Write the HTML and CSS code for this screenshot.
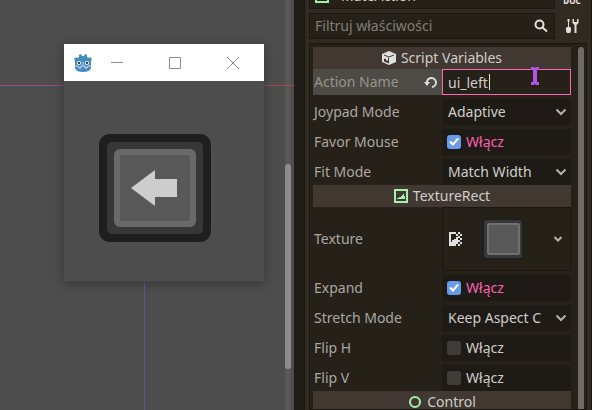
FILE: index.html
```
<!DOCTYPE html>
<html lang="pl">
<head>
<meta charset="utf-8">
<meta name="viewport" content="width=device-width, initial-scale=1">
<title>Inspektor</title>
<link rel="stylesheet" href="styles.css">
</head>
<body>
<svg class="defs" aria-hidden="true">
  <symbol id="chevron" viewBox="0 0 12 12"><path d="M1.5 3.5 6 8l4.500-4.500" fill="none" stroke="currentColor" stroke-width="2"/></symbol>
  <symbol id="texture-rect" viewBox="0 0 14 14"><path d="M1 1h12v12H1z" fill="none" stroke="#a5efac" stroke-width="2"/><path d="M3 10V9h2V8h2V7h1V6h1V5h1v2h1v3z" fill="#a5efac"/></symbol>
</svg>
<main class="editor">
  <section class="viewport">
    <div class="canvas">
      <div class="axis-x"></div>
      <div class="axis-y"></div>
      <div class="game">
        <header class="game-bar">
          <svg class="logo" viewBox="0 0 18 18" aria-hidden="true">
            <path d="M5 3V1l2-1 1 2h2l1-2 2 1v2l2 1 1-1 2 2-1 2v7q-1 4-8 4t-8-4V7L0 5l2-2 1 1z" fill="#478cbf"/>
            <path d="M1 12h3l1 2h2v-2h4v2h2l1-2h3" fill="none" stroke="#cfe3f0" stroke-width="1"/>
            <circle cx="5" cy="9" r="2" fill="#fff"/><circle cx="13" cy="9" r="2" fill="#fff"/>
            <circle cx="5" cy="9" r="1.200" fill="#414042"/><circle cx="13" cy="9" r="1.200" fill="#414042"/>
            <path d="M8.500 8h1v3h-1z" fill="#cfe3f0"/>
          </svg>
          <button class="win-btn" aria-label="Minimalizuj"><svg viewBox="0 0 12 12"><path d="M0 5.500h12"/></svg></button>
          <button class="win-btn" aria-label="Maksymalizuj"><svg viewBox="0 0 12 12"><path d="M.5.5h11v11H.5z"/></svg></button>
          <button class="win-btn" aria-label="Zamknij"><svg viewBox="0 0 12 12"><path d="m0 0 12 12M12 0 0 12"/></svg></button>
        </header>
        <div class="game-body">
          <svg class="key" viewBox="0 0 112 108" preserveAspectRatio="none" aria-hidden="true">
            <rect width="112" height="108" rx="11" fill="#1f1f1f"/>
            <rect x="8" y="8" width="96" height="92" rx="5" fill="#373737"/>
            <rect x="15" y="15" width="82" height="78" rx="6" fill="#696969"/>
            <rect x="21" y="21" width="70" height="66" rx="2" fill="#585858"/>
            <path d="M32 54 56 36v9h22v18H56v9z" fill="#cdcdcd"/>
          </svg>
        </div>
      </div>
    </div>
    <div class="view-scroll"><div class="view-thumb"></div></div>
  </section>
  <aside class="dock">
    <div class="tool-row object-row">
      <div class="field object-name"><svg class="icon"><use href="#texture-rect"/></svg><span>MateAction</span></div>
      <button class="tool doc" aria-label="Dokumentacja">DOC</button>
    </div>
    <div class="tool-row">
      <div class="field">
        <input class="filter" type="text" placeholder="Filtruj właściwości" aria-label="Filtruj właściwości">
        <svg class="icon" viewBox="0 0 14 14" aria-hidden="true"><circle cx="5.500" cy="5.500" r="4" fill="none" stroke="#e0dfdc" stroke-width="2"/><path d="m8.500 8.500 4.500 4" stroke="#e0dfdc" stroke-width="2"/></svg>
      </div>
      <button class="tool" aria-label="Narzędzia"><svg class="icon" viewBox="0 0 14 14"><path d="M2.500 0h2v2L4 3v5h1l1 1v3l-1 2H2l-1-2V9l1-1h1V3l-.5-1zM7.500 0v4l2 2v8h2V6l2-2V0H12v3H9V0z" fill="#e0dfdc"/></svg></button>
    </div>
    <div class="inspector">
      <div class="props">
        <h2 class="section"><svg class="icon" viewBox="0 0 14 14" aria-hidden="true"><path d="M7 0 0 3v8l7 3 7-3V3z" fill="#e0e0e0"/><path d="M2 4l5 2 5-2" stroke="#403831" fill="none" stroke-width="1"/><path d="M7 6.500v6L2 10.500v-3L4 8v1l2 1V7z" fill="#403831"/></svg>Script Variables</h2>
        <div class="row active">
          <label for="action">Action Name</label>
          <button class="revert" aria-label="Przywróć"><svg class="icon" viewBox="0 0 14 14"><path d="M3 8V7a4.500 4.500 0 1 1 5 5" fill="none" stroke="#e0e0e0" stroke-width="2"/><path d="M0 7h6L3 11z" fill="#e0e0e0"/></svg></button>
          <div class="value"><input id="action" class="text" type="text" value="ui_left"><span class="caret"></span>
            <svg class="pointer" viewBox="0 0 8 18" aria-hidden="true"><path d="M0 0h3l1 1 1-1h3v3H6v12h2v3H5l-1-1-1 1H0v-3h2V3H0z" fill="#b054ea"/></svg>
          </div>
        </div>
        <div class="row"><label for="joypad">Joypad Mode</label><div class="value"><select id="joypad"><option>Adaptive</option></select><svg class="chev"><use href="#chevron"/></svg></div></div>
        <div class="row"><label for="favor">Favor Mouse</label><label class="value check"><input id="favor" type="checkbox" checked><span>Włącz</span></label></div>
        <div class="row"><label for="fit">Fit Mode</label><div class="value"><select id="fit"><option>Match Width</option></select><svg class="chev"><use href="#chevron"/></svg></div></div>
        <h2 class="section"><svg class="icon"><use href="#texture-rect"/></svg>TextureRect</h2>
        <div class="row"><span class="name">Texture</span>
          <div class="value texture">
            <svg class="icon" viewBox="0 0 14 14" aria-hidden="true"><path d="M0 0h7v2H2v8h5v4H0zM3 10V8h2V7h2V5h2v5zM9 0h2v2H9zM7 2h2v2H7zM11 2h2v2h-2zM9 4h2v2H9zM11 6h2v2h-2zM9 8h2v2H9zM11 10h2v2h-2zM7 10h2v2H7zM9 12h2v2H9z" fill="#e0e0e0"/></svg>
            <svg class="thumb" viewBox="0 0 42 42" aria-hidden="true"><rect width="42" height="42" rx="4" fill="#1f1f20"/><rect x="2" y="2" width="38" height="38" rx="2" fill="#373737"/><rect x="5" y="5" width="33" height="32" rx="2" fill="#707070"/><rect x="7" y="7" width="29" height="28" rx="1" fill="#585858"/></svg>
            <button class="more" aria-label="Więcej"><svg viewBox="0 0 8 8"><path d="M.5 2 4 5.500 7.500 2" fill="none" stroke="#b5b2ad" stroke-width="2"/></svg></button>
          </div>
        </div>
        <div class="row"><label for="expand">Expand</label><label class="value check"><input id="expand" type="checkbox" checked><span>Włącz</span></label></div>
        <div class="row"><label for="stretch">Stretch Mode</label><div class="value"><select id="stretch"><option>Keep Aspect C</option></select><svg class="chev"><use href="#chevron"/></svg></div></div>
        <div class="row"><label for="fliph">Flip H</label><label class="value check"><input id="fliph" type="checkbox"><span>Włącz</span></label></div>
        <div class="row"><label for="flipv">Flip V</label><label class="value check"><input id="flipv" type="checkbox"><span>Włącz</span></label></div>
        <h2 class="section"><svg class="icon" viewBox="0 0 14 14" aria-hidden="true"><circle cx="7" cy="7" r="5" fill="none" stroke="#a5efac" stroke-width="2"/></svg>Control</h2>
      </div>
      <div class="dock-scroll"></div>
    </div>
  </aside>
</main>
</body>
</html>
```
FILE: styles.css
```
* { box-sizing: border-box; }
body {
  margin: 0;
  height: 100vh;
  overflow: hidden;
  background: #1f1c17;
  color: #d0cdc8;
  font: 14px/20px "Noto Sans", sans-serif;
}
button, input, select { font: inherit; color: inherit; margin: 0; padding: 0; border: 0; background: none; outline: 0; }
svg { display: block; flex: none; }
.defs { position: absolute; width: 0; height: 0; }
.icon { width: 14px; height: 14px; }
.editor { display: flex; gap: 10px; height: 100%; }

.viewport { flex: 1; display: flex; position: relative; background: #4d4d4d; }
.canvas { flex: 1; }
.axis-x, .axis-y { position: absolute; }
.axis-x { top: 85px; left: 0; right: 0; height: 1px; background: linear-gradient(90deg, #964b8c 40%, #b0405a 60%); }
.axis-y { top: 85px; bottom: 0; left: 144px; width: 1px; background: #5656a8; }
.game {
  position: absolute;
  left: 64px;
  top: 44px;
  width: 200px;
  background: #4d4d4d;
  box-shadow: 0 0 0 1px #454545, 0 2px 10px rgba(0, 0, 0, .35);
}
.game-bar { display: flex; align-items: center; height: 37px; padding: 0 2px 0 10px; background: #fff; }
.logo { width: 18px; height: 18px; margin-right: -4px; }
.win-btn { flex: 1; display: flex; justify-content: center; }
.win-btn svg { width: 12px; height: 12px; fill: none; stroke: #8c8c8c; stroke-width: 1; }
.game-body { display: flex; padding: 53px 35px 39px; }
.key { width: 112px; height: 108px; }
.view-scroll { display: flex; flex-direction: column; width: 6px; margin-right: 3px; padding-top: 164px; background: #585858; }
.view-thumb { height: 205px; border-radius: 3px; background: #8c8c8c; }

.dock { flex: none; width: 288px; display: flex; flex-direction: column; gap: 4px; padding: 0 4px; margin-top: -17px; background: #302b20; border-left: 1px solid #1a1712; border-right: 1px solid #1a1712; }
.tool-row { display: flex; height: 26px; flex: none; }
.field { flex: 1; min-width: 0; display: flex; align-items: center; gap: 8px; padding: 0 6px 0 5px; background: #252119; border: 1px solid #1c1914; }
.object-name { gap: 12px; }
.filter { flex: 1; min-width: 0; }
.filter::placeholder { color: #817d77; opacity: 1; }
.tool { width: 32px; display: flex; align-items: center; justify-content: center; padding-left: 2px; color: #e0dfdc; }
.doc { font-size: 8px; font-weight: 800; line-height: 8px; align-items: flex-end; padding-bottom: 4px; }

.inspector { flex: 1; min-height: 0; overflow: hidden; display: flex; gap: 7px; padding: 3px 2px 0 3px; background: #252119; border: 1px solid #1a1712; }
.props { flex: 1; min-width: 0; }
.dock-scroll { width: 6px; border-radius: 3px 3px 0 0; background: #6e6a64; }
.section { display: flex; align-items: center; justify-content: center; gap: 5px; height: 22px; margin: 0; background: #403831; font-size: 14px; font-weight: 400; }
.row { display: flex; align-items: stretch; min-height: 26px; margin-bottom: 4px; color: #aaa7a1; }
.row:has(+ .section) { margin-bottom: 0; }
.row > label:first-child, .name { flex: 1; align-self: center; padding-left: 1px; }
.row.active { background: #4d4b45; }
.active > label:first-child { color: #96948f; }
.revert { margin-right: 4px; }
.value { position: relative; flex: 0 0 50%; display: flex; align-items: center; background: #1e1b17; color: #d0cdc8; }
.text { width: 100%; height: 26px; padding: 0 5px; border: 1px solid #ff66b3; background: #252119; }
.caret { position: absolute; left: 47px; top: 5px; width: 1px; height: 16px; background: #e0e0e0; }
.pointer { position: absolute; right: 32px; top: -2px; width: 8px; height: 18px; }
select { appearance: none; width: 100%; height: 26px; padding: 0 6px; }
.chev { position: absolute; right: 4px; top: 7px; width: 12px; height: 12px; color: #b5b2ad; pointer-events: none; }
.check { gap: 5px; padding-left: 5px; }
.check input { appearance: none; width: 14px; height: 14px; border-radius: 3px; background: #403d38; }
.check input:checked { background: #699ce8; }
.check input:checked::before { content: ""; display: block; height: 14px; background: #fff; clip-path: polygon(2px 7px, 4px 6px, 6px 8px, 10px 3px, 12px 4px, 6px 11px); }
.check input:checked + span { color: #ff5fae; }
.texture { height: 64px; justify-content: space-between; padding: 0 8px 0 6px; background: #252119; border: 1px solid #1a1712; }
.thumb { width: 42px; height: 42px; margin-right: 12px; }
.more svg { width: 8px; height: 8px; }
```
